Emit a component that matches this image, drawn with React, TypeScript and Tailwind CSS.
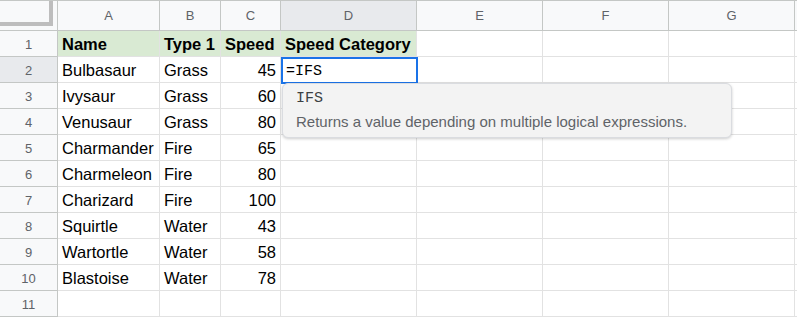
import React from "react";

const cols = ["A", "B", "C", "D", "E", "F", "G"];
const widths = ["w-[102px]", "w-[61px]", "w-[60px]", "w-[136px]", "w-[126px]", "w-[126px]", "w-[126px]"];

const data: [string, string, string][] = [
  ["Bulbasaur", "Grass", "45"],
  ["Ivysaur", "Grass", "60"],
  ["Venusaur", "Grass", "80"],
  ["Charmander", "Fire", "65"],
  ["Charmeleon", "Fire", "80"],
  ["Charizard", "Fire", "100"],
  ["Squirtle", "Water", "43"],
  ["Wartortle", "Water", "58"],
  ["Blastoise", "Water", "78"],
];

const font = { fontFamily: '"Liberation Sans", Arial, sans-serif' };

export default function App() {
  return (
    <div className="relative w-[797px] h-[319px] overflow-hidden bg-white" style={font}>
      <div className="border-t border-[#c4c7c5]">
        {/* Header row */}
        <div className="flex h-[30px]">
          <div className="w-[58px] shrink-0 bg-[#f8f9fa] border-r border-b border-[#c4c7c5] relative">
            <div className="absolute left-0 top-0 w-[53px] h-[25px] border-r-4 border-b-4 border-[#bdbdbd]" />
          </div>
          {cols.map((c, i) => (
            <div
              key={c}
              className={`${widths[i]} shrink-0 border-r border-b border-[#c4c7c5] flex items-center justify-center pt-[1px] text-[13px] text-[#5f6368] ${c === "D" ? "bg-[#e8eaed]" : "bg-[#f8f9fa]"}`}
            >
              {c}
            </div>
          ))}
          <div className="flex-1 bg-[#f8f9fa] border-b border-[#c4c7c5]" />
        </div>
        {/* Row 1 */}
        <div className="flex h-[26px]">
          <div className="w-[58px] shrink-0 bg-[#f8f9fa] border-r border-b border-[#c4c7c5] flex items-center justify-center pt-[2px] text-[13px] text-[#5f6368]">1</div>
          {["Name", "Type 1", "Speed", "Speed Category"].map((t, i) => (
            <div key={t} className={`${widths[i]} shrink-0 bg-[#d9ead3] border-r border-b border-[#e2e2e2] flex items-center px-[4px] pt-[2px] text-[16.5px] font-bold text-black whitespace-nowrap overflow-hidden`}>
              {t}
            </div>
          ))}
          {[4, 5, 6].map((i) => (
            <div key={i} className={`${widths[i]} shrink-0 border-r border-b border-[#e2e2e2]`} />
          ))}
          <div className="flex-1 border-b border-[#e2e2e2]" />
        </div>
        {data.map((r, idx) => {
          const n = idx + 2;
          return (
            <div key={n} className="flex h-[26px]">
              <div className={`w-[58px] shrink-0 border-r border-b border-[#c4c7c5] flex items-center justify-center pt-[2px] text-[13px] text-[#5f6368] ${n === 2 ? "bg-[#e8eaed]" : "bg-[#f8f9fa]"}`}>{n}</div>
              <div className={`${widths[0]} shrink-0 border-r border-b border-[#e2e2e2] flex items-center px-[4px] pt-[2px] text-[16.5px] text-black whitespace-nowrap`}>{r[0]}</div>
              <div className={`${widths[1]} shrink-0 border-r border-b border-[#e2e2e2] flex items-center px-[4px] pt-[2px] text-[16.5px] text-black whitespace-nowrap`}>{r[1]}</div>
              <div className={`${widths[2]} shrink-0 border-r border-b border-[#e2e2e2] flex items-center justify-end px-[4px] pt-[2px] text-[16.5px] text-black whitespace-nowrap`}>{r[2]}</div>
              {[3, 4, 5, 6].map((i) => (
                <div key={i} className={`${widths[i]} shrink-0 border-r border-b border-[#e2e2e2]`} />
              ))}
              <div className="flex-1 border-b border-[#e2e2e2]" />
            </div>
          );
        })}
        {/* Row 11 */}
        <div className="flex h-[26px]">
          <div className="w-[58px] shrink-0 bg-[#f8f9fa] border-r border-b border-[#c4c7c5] flex items-center justify-center pt-[2px] text-[13px] text-[#5f6368]">11</div>
          {[0, 1, 2, 3, 4, 5, 6].map((i) => (
            <div key={i} className={`${widths[i]} shrink-0 border-r border-b border-[#e2e2e2]`} />
          ))}
          <div className="flex-1 border-b border-[#e2e2e2]" />
        </div>
      </div>

      {/* Active cell editor D2 */}
      <div className="absolute left-[281px] top-[57px] w-[137px] h-[27px] border-2 border-[#1a73e8] bg-white flex items-center pl-[3px] pt-[3px]">
        <span className="text-[15px] text-black" style={{ fontFamily: '"Liberation Mono", "DejaVu Sans Mono", monospace' }}>=IFS</span>
      </div>

      {/* Tooltip */}
      <div className="absolute left-[282px] top-[83px] w-[450px] h-[55px] rounded-[6px] bg-[#f3f3f3] border border-[#dadce0] shadow-[0_1px_3px_rgba(0,0,0,0.2)] pl-[13px] pt-[5px]">
        <div className="text-[15px] leading-[20px] text-[#3c4043]" style={{ fontFamily: '"Liberation Mono", "DejaVu Sans Mono", monospace' }}>IFS</div>
        <div className="text-[15px] leading-[20px] mt-[3px] text-[#5f6368]">Returns a value depending on multiple logical expressions.</div>
      </div>
    </div>
  );
}
